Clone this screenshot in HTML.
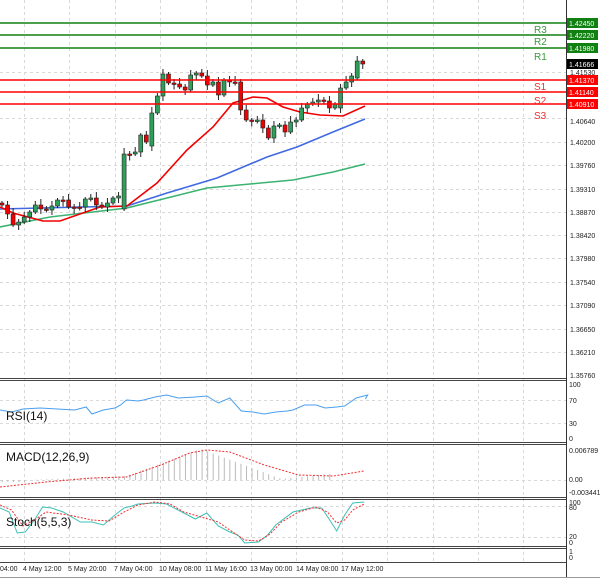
<!DOCTYPE html>
<html><head><meta charset="utf-8"><style>
html,body{margin:0;padding:0;background:#fff;width:600px;height:581px;overflow:hidden}
svg{display:block;font-family:"Liberation Sans",sans-serif}
</style></head><body>
<svg id="s" width="600" height="581" viewBox="0 0 600 581" xmlns="http://www.w3.org/2000/svg">
<rect width="600" height="581" fill="#fff"/>
<g id="grid" stroke="#d8d8d8" stroke-dasharray="3,3" stroke-width="1"></g>
<polyline fill="none" stroke="#3cb371" stroke-width="1.6" points="0,227 50,217 127,208 167,198 207,188 250,184 293,180 333,172 365,164"/>
<polyline fill="none" stroke="#4169e1" stroke-width="1.6" points="0,209 40,208 127,206 167,193 217,178 267,157 297,147 333,132 365,119"/>
<polyline fill="none" stroke="#f00000" stroke-width="1.6" points="0,207 13,213 43,221 60,221 100,207 127,206 157,183 187,150 213,127 233,103 253,97 267,98 283,107 300,112 320,115 343,116 365,106"/>
<g id="candles"></g>
<g stroke-width="1.6">
<line x1="0" y1="23" x2="566" y2="23" stroke="#108010"/>
<line x1="0" y1="35" x2="566" y2="35" stroke="#108010"/>
<line x1="0" y1="48" x2="566" y2="48" stroke="#108010"/>
<line x1="0" y1="80" x2="566" y2="80" stroke="#f00"/>
<line x1="0" y1="92" x2="566" y2="92" stroke="#f00"/>
<line x1="0" y1="104" x2="566" y2="104" stroke="#f00"/>
</g>
<g font-size="10" fill="#3a9a3a"><text x="534" y="33">R3</text><text x="534" y="45">R2</text><text x="534" y="60">R1</text></g>
<g font-size="10" fill="#f03030"><text x="534" y="90">S1</text><text x="534" y="104">S2</text><text x="534" y="119">S3</text></g>
<rect x="566" y="0" width="34" height="581" fill="#fff"/>
<line x1="566.5" y1="0" x2="566.5" y2="577" stroke="#333"/>
<g font-size="7" fill="#222">
<text x="570" y="124">1.40640</text><text x="570" y="145">1.40200</text><text x="570" y="168">1.39760</text><text x="570" y="192">1.39310</text><text x="570" y="215">1.38870</text><text x="570" y="238">1.38420</text><text x="570" y="261">1.37980</text><text x="570" y="285">1.37540</text><text x="570" y="308">1.37090</text><text x="570" y="332">1.36650</text><text x="570" y="355">1.36210</text><text x="570" y="378">1.35760</text><text x="570" y="75">1.41530</text>
</g>
<g font-size="7">
<rect x="567" y="18" width="31" height="10" fill="#108010"/><text x="569" y="26" fill="#fff">1.42450</text>
<rect x="567" y="30" width="31" height="10" fill="#108010"/><text x="569" y="38" fill="#fff">1.42220</text>
<rect x="567" y="43" width="31" height="10" fill="#108010"/><text x="569" y="51" fill="#fff">1.41980</text>
<rect x="567" y="59" width="31" height="10" fill="#000"/><text x="569" y="67" fill="#fff">1.41666</text>
<rect x="567" y="75" width="31" height="10" fill="#f00"/><text x="569" y="83" fill="#fff">1.41370</text>
<rect x="567" y="87" width="31" height="10" fill="#f00"/><text x="569" y="95" fill="#fff">1.41140</text>
<rect x="567" y="99" width="31" height="10" fill="#f00"/><text x="569" y="107" fill="#fff">1.40910</text>
</g>
<g stroke="#444" stroke-width="1">
<line x1="0" y1="378.5" x2="566" y2="378.5"/><line x1="0" y1="380.5" x2="566" y2="380.5"/>
<line x1="0" y1="442.5" x2="566" y2="442.5"/><line x1="0" y1="444.5" x2="566" y2="444.5"/>
<line x1="0" y1="497.5" x2="566" y2="497.5"/><line x1="0" y1="499.5" x2="566" y2="499.5"/>
<line x1="0" y1="546.5" x2="566" y2="546.5"/><line x1="0" y1="548.5" x2="566" y2="548.5"/>
<line x1="0" y1="562.5" x2="566" y2="562.5"/>
<line x1="0" y1="577.5" x2="600" y2="577.5" stroke="#999"/>
</g>
<g transform="scale(1.149,1)">
<polyline fill="none" stroke="#4a9ef0" stroke-width="1" vector-effect="non-scaling-stroke" points="0,410 10,412 20,409 35,408 50,409 65,410 75,407 80,414 90,410 100,408 105,405 110,400 120,401 125,400 135,397 145,395 155,398 170,397 180,396 190,403 200,398 210,411 220,412 230,414 240,412 250,411 255,410 265,405 275,405 283,408 293,407 300,406 310,398 320,395 318,399"/>
<g id="hist" stroke="#bbb" stroke-width="1"></g>
<polyline fill="none" stroke="#f03030" stroke-width="1" stroke-dasharray="2,1.5" vector-effect="non-scaling-stroke" points="0,487 40,482 80,478 110,477 140,465 165,453 180,450 200,452 230,465 260,475 290,476 317,471"/>
<polyline fill="none" stroke="#3cc0b8" stroke-width="1" vector-effect="non-scaling-stroke" points="0,508 8,512 15,533 22,532 30,520 37,507 45,508 55,512 70,522 80,522 90,525 100,515 108,508 115,506 120,504 135,503 145,504 155,510 170,519 180,513 190,526 200,532 207,535 213,543 225,542 233,535 240,525 255,512 270,508 280,508 287,520 293,531 300,515 307,503 317,502"/>
<polyline fill="none" stroke="#f03030" stroke-width="1" stroke-dasharray="2,1.5" vector-effect="non-scaling-stroke" points="0,505 10,510 20,526 30,520 40,512 60,515 80,520 95,521 108,512 120,505 135,502 148,504 160,512 175,517 190,522 200,530 213,540 225,541 235,534 245,522 260,512 275,507 285,512 293,523 300,520 307,510 317,504"/>
</g>
<text x="6" y="420" font-size="12" fill="#111">RSI(14)</text>
<g font-size="7" fill="#222"><text x="569" y="387">100</text><text x="569" y="403">70</text><text x="569" y="426">30</text><text x="569" y="441">0</text></g>
<text x="6" y="461" font-size="12" fill="#111">MACD(12,26,9)</text>
<g font-size="7" fill="#222"><text x="569" y="453">0.006789</text><text x="569" y="482">0.00</text><text x="569" y="495">-0.003441</text></g>
<text x="6" y="526" font-size="12" fill="#111">Stoch(5,5,3)</text>
<g font-size="7" fill="#222"><text x="569" y="505">100</text><text x="569" y="510">80</text><text x="569" y="539">20</text><text x="569" y="545">0</text><text x="569" y="554">1</text><text x="569" y="560">0</text></g>
<g font-size="7" fill="#222">
<text x="0" y="571">04:00</text><text x="23" y="571">4 May 12:00</text><text x="68" y="571">5 May 20:00</text><text x="114" y="571">7 May 04:00</text><text x="159" y="571">10 May 08:00</text><text x="205" y="571">11 May 16:00</text><text x="250" y="571">13 May 00:00</text><text x="296" y="571">14 May 08:00</text><text x="341" y="571">17 May 12:00</text>
</g>
</svg>
<script>
(function(){
var NS="http://www.w3.org/2000/svg";
function el(p,t,a){var e=document.createElementNS(NS,t);for(var k in a)e.setAttribute(k,a[k]);p.appendChild(e);return e;}
var g=document.getElementById('grid');
for(var x=24;x<566;x+=45.4){el(g,'line',{x1:Math.round(x)+.5,y1:0,x2:Math.round(x)+.5,y2:562});}
[72,118,142,165,189,212,235,258,282,305,329,352,400,423,480,506,537].forEach(function(y){el(g,'line',{x1:0,y1:y+.5,x2:566,y2:y+.5});});
var c=[205,214,225,222,217,212,205,209,210,206,200,200,207,207,207,199,198,205,207,203,198,196,154,154,152,135,142,113,96,74,83,84,87,90,75,73,76,85,82,95,80,82,82,110,120,121,120,128,138,126,125,132,122,120,108,104,102,100,101,108,104,88,82,76,61,64];
var cg=document.getElementById('candles');
var prev=203;
for(var i=0;i<c.length;i++){
 var x=2+i*5.55,o=prev,cl=c[i];
 if(i==22)o=209; if(i==27)o=146; if(i==43)o=82; if(i==61)o=108; if(i==64)o=78;
 var top=Math.min(o,cl),bot=Math.max(o,cl);
 if(bot-top<1.5){bot=top+1.5;}
 var hi=top-2-((i*7)%5),lo=bot+2+((i*3)%6);
 el(cg,'line',{x1:x,y1:hi,x2:x,y2:lo,stroke:'#222','stroke-width':1});
 el(cg,'rect',{x:x-2,y:top,width:4,height:bot-top,fill:cl<o?'#2e9e5a':'#f00000',stroke:'#222','stroke-width':.6});
 prev=cl;
}
var h=document.getElementById('hist');
for(var i=0;i<60;i++){
 var x=2+i*5.55/1.149;var v;
 if(x>318)break;
 if(x<25)v=-2; else if(x<110)v=(x-25)/85*4; else if(x<175)v=4+(x-110)/65*27; else if(x<245)v=31-(x-175)/70*30; else v=1+(x-245)/75*9;
 el(h,'line',{x1:x,y1:480,x2:x,y2:480-v,'vector-effect':'non-scaling-stroke'});
}
})();
</script>
</body></html>
